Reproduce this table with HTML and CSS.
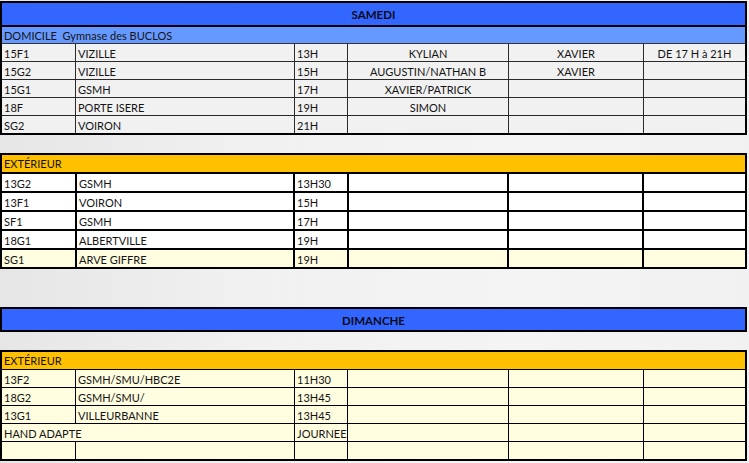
FILE: index.html
```html
<!DOCTYPE html>
<html lang="fr">
<head>
<meta charset="utf-8">
<title>Planning</title>
<link rel="stylesheet" href="styles.css">
</head>
<body>
<div class="page">
  <section class="sheet sheet-home">
    <div class="day-title">SAMEDI</div>
    <div class="sub-band">DOMICILE&nbsp; Gymnase des BUCLOS</div>
    <div class="grid grid-home">
      <div class="c">15F1</div><div class="c">VIZILLE</div><div class="c">13H</div><div class="c mid">KYLIAN</div><div class="c mid">XAVIER</div><div class="c mid">DE 17 H à 21H</div>
      <div class="c">15G2</div><div class="c">VIZILLE</div><div class="c">15H</div><div class="c mid">AUGUSTIN/NATHAN B</div><div class="c mid">XAVIER</div><div class="c mid"></div>
      <div class="c">15G1</div><div class="c">GSMH</div><div class="c">17H</div><div class="c mid">XAVIER/PATRICK</div><div class="c mid"></div><div class="c mid"></div>
      <div class="c">18F</div><div class="c">PORTE ISERE</div><div class="c">19H</div><div class="c mid">SIMON</div><div class="c mid"></div><div class="c mid"></div>
      <div class="c">SG2</div><div class="c">VOIRON</div><div class="c">21H</div><div class="c mid"></div><div class="c mid"></div><div class="c mid"></div>
    </div>
  </section>

  <section class="sheet sheet-away">
    <div class="orange-band thick">EXTÉRIEUR</div>
    <div class="grid grid-away">
      <div class="c">13G2</div><div class="c">GSMH</div><div class="c">13H30</div><div class="c"></div><div class="c"></div><div class="c"></div>
      <div class="c">13F1</div><div class="c">VOIRON</div><div class="c">15H</div><div class="c"></div><div class="c"></div><div class="c"></div>
      <div class="c">SF1</div><div class="c">GSMH</div><div class="c">17H</div><div class="c"></div><div class="c"></div><div class="c"></div>
      <div class="c">18G1</div><div class="c">ALBERTVILLE</div><div class="c">19H</div><div class="c"></div><div class="c"></div><div class="c"></div>
      <div class="c y">SG1</div><div class="c y">ARVE GIFFRE</div><div class="c y">19H</div><div class="c y"></div><div class="c y"></div><div class="c y"></div>
    </div>
  </section>

  <section class="sheet sheet-day">
    <div class="day-title solo">DIMANCHE</div>
  </section>

  <section class="sheet sheet-sunday">
    <div class="orange-band">EXTÉRIEUR</div>
    <div class="grid grid-sunday">
      <div class="c">13F2</div><div class="c">GSMH/SMU/HBC2E</div><div class="c">11H30</div><div class="c"></div><div class="c"></div><div class="c"></div>
      <div class="c">18G2</div><div class="c">GSMH/SMU/</div><div class="c">13H45</div><div class="c"></div><div class="c"></div><div class="c"></div>
      <div class="c">13G1</div><div class="c">VILLEURBANNE</div><div class="c">13H45</div><div class="c"></div><div class="c"></div><div class="c"></div>
      <div class="c span2">HAND ADAPTE</div><div class="c">JOURNEE</div><div class="c"></div><div class="c"></div><div class="c"></div>
      <div class="c"></div><div class="c"></div><div class="c"></div><div class="c"></div><div class="c"></div><div class="c"></div>
    </div>
  </section>
</div>
</body>
</html>
```

FILE: styles.css
```css
* { box-sizing: border-box; }

html, body {
  margin: 0;
  padding: 0;
}

body {
  width: 749px;
  height: 463px;
  overflow: hidden;
  background: linear-gradient(to right, #e6e6e6 0%, #f1f1f1 35%, #f4f4f4 70%, #f1f1f1 100%);
  font-family: "Lato", "Open Sans", sans-serif;
  font-size: 11px;
  color: #141414;
}

.page {
  padding-top: 1px;
  width: 747px;
  display: flex;
  flex-direction: column;
}

.sheet {
  border: 2px solid #000;
}

.sheet-away { margin-top: 18px; }
.sheet-day { margin-top: 38px; }
.sheet-sunday { margin-top: 18px; }

.day-title {
  height: 24px;
  border-bottom: 2px solid #000;
  background: #3366ff;
  font-weight: bold;
  font-size: 11.5px;
  display: flex;
  align-items: center;
  justify-content: center;
  padding-top: 1px;
  color: #0a0a1a;
}

.day-title.solo {
  height: 21px;
  border-bottom: 0;
}

.sub-band {
  height: 17px;
  background: #6699ff;
  border-bottom: 1px solid #333;
  padding-left: 2px;
  display: flex;
  align-items: center;
  white-space: pre;
}

.orange-band {
  height: 18px;
  background: #ffc000;
  border-bottom: 1px solid #000;
  padding-left: 2px;
  display: flex;
  align-items: center;
}

.orange-band.thick {
  height: 19px;
  border-bottom-width: 2px;
}

.grid {
  display: grid;
  grid-auto-rows: 17px;
}

.grid-home {
  background: #2a2a2a;
  gap: 1px;
  grid-template-columns: 73px 218px 52px 160px 134px 1fr;
}

.grid-away {
  background: #000;
  gap: 2px;
  grid-template-columns: 73px 216px 52px 158px 133px 1fr;
}

.grid-sunday {
  background: #000;
  gap: 1px;
  grid-template-columns: 73px 218px 52px 160px 134px 1fr;
}

.c {
  padding-left: 2px;
  display: flex;
  align-items: center;
  white-space: nowrap;
  overflow: hidden;
  padding-top: 1px;
}

.grid-home .c { background: #f1f1f1; }
.grid-away .c { background: #ffffff; }
.grid-away .c.y { background: #fffde0; }
.grid-sunday .c { background: #fffde0; }

.mid {
  justify-content: center;
  padding-left: 0;
}

.span2 { grid-column: span 2; }
```
